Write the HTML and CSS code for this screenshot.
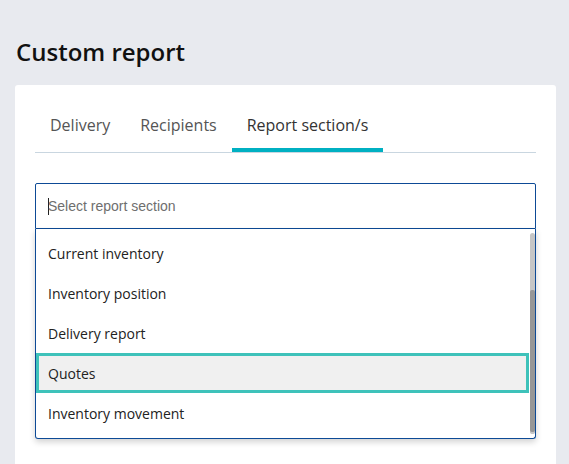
FILE: index.html
```html
<!DOCTYPE html>
<html>
<head>
<meta charset="utf-8">
<link rel="stylesheet" href="styles.css">
</head>
<body>
<h1 class="title">Custom report</h1>
<div class="card">
  <div class="tabs">
    <div class="tab">Delivery</div>
    <div class="tab">Recipients</div>
    <div class="tab active">Report section/s</div>
  </div>
  <div class="dropdown">
    <div class="input"><span class="caret"></span><span class="placeholder">Select report section</span></div>
    <div class="list">
      <div class="items">
        <div class="item">Current inventory</div>
        <div class="item">Inventory position</div>
        <div class="item">Delivery report</div>
        <div class="item focused">Quotes</div>
        <div class="item">Inventory movement</div>
      </div>
      <div class="scrollbar"><div class="thumb"></div></div>
    </div>
  </div>
</div>
</body>
</html>
```
FILE: styles.css
```css
html, body {
  margin: 0;
  padding: 0;
  background: #e8eaef;
  font-family: "Open Sans", sans-serif;
  height: 464px;
  overflow: hidden;
}
.title {
  margin: 35px 0 17px 16px;
  font-size: 24px;
  line-height: 33px;
  font-weight: 600;
  color: #111;
}
.card {
  margin-left: 15px;
  width: 501px;
  background: #fff;
  border-radius: 3px;
  padding: 14px 20px 30px 20px;
}
.tabs {
  display: flex;
  border-bottom: 1px solid #c9d6e0;
}
.tab {
  padding: 14px 15px 11px 15px;
  font-size: 16px;
  line-height: 24px;
  color: #555;
  border-bottom: 4px solid transparent;
}
.tab.active {
  color: #333;
  border-bottom-color: #00b0c2;
}
.dropdown {
  margin-top: 30px;
}
.input {
  height: 44px;
  border: 1px solid #0d4a96;
  border-radius: 2px 2px 0 0;
  display: flex;
  align-items: center;
  padding-left: 12px;
}
.caret {
  width: 1px;
  height: 17px;
  background: #222;
  margin-right: -1px;
}
.placeholder {
  font-family: "Liberation Sans", Arial, sans-serif;
  font-size: 14px;
  color: #6e6e6e;
}
.list {
  display: flex;
  border: 1px solid #0d4a96;
  border-top: none;
  border-radius: 0 0 3px 3px;
  box-shadow: 0 3px 6px rgba(0, 0, 0, 0.18);
  padding: 4px 0 5px 0;
}
.items {
  flex: 1;
}
.item {
  height: 40px;
  display: flex;
  align-items: center;
  padding-left: 12px;
  font-size: 14px;
  color: #222;
}
.item.focused {
  background: #f0f0f0;
  border: 3px solid #3ec2ba;
  padding-left: 9px;
  height: 34px;
}
.scrollbar {
  width: 5px;
  margin-left: 1px;
  background: #c6c6c6;
  border-radius: 3px 3px 2px 2px;
  display: flex;
  flex-direction: column;
  justify-content: flex-end;
  margin-bottom: -1px;
}
.thumb {
  height: 142px;
  background: #979797;
  border-radius: 2px;
  margin-bottom: 2px;
}
```
